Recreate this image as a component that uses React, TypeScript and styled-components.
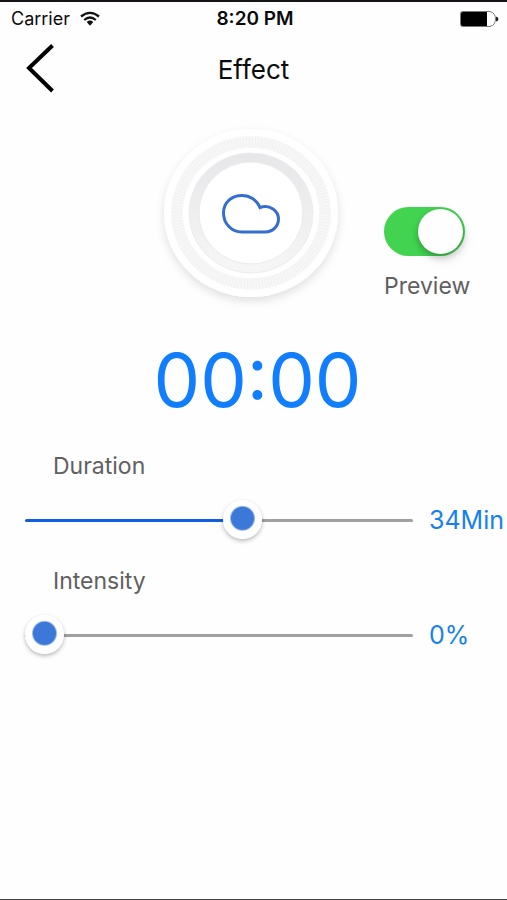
import React, { useState } from "react";
import styled, { createGlobalStyle } from "styled-components";

const GlobalStyle = createGlobalStyle`
  * { box-sizing: border-box; }
  body { margin: 0; background: #fefefe; }
`;

const Screen = styled.div`
  min-height: 100vh;
  display: flex;
  flex-direction: column;
  border-top: 2px solid #161416;
  border-bottom: 1px solid #444;
  background: #fefefe;
  color: #0b0b0b;
  font-family: Inter, "Liberation Sans", sans-serif;
  overflow: hidden;
`;

const StatusBar = styled.div`
  display: grid;
  grid-template-columns: 1fr auto 1fr;
  align-items: center;
  height: 33px;
  padding: 0 8px 0 11px;
  font-size: 18px;
  line-height: 24px;
`;

const Carrier = styled.div`
  display: flex;
  align-items: center;
  gap: 10px;
`;

const Clock = styled.div`
  font-size: 19px;
  font-weight: 600;
`;

const Battery = styled.svg`
  justify-self: end;
`;

const NavBar = styled.header`
  display: grid;
  grid-template-columns: 1fr auto 1fr;
  align-items: center;
  height: 66px;
  padding: 0 24px;
`;

const BackButton = styled.button`
  display: flex;
  width: 32px;
  height: 52px;
  padding: 0;
  border: 0;
  background: none;
  color: #000;
  cursor: pointer;
`;

const Title = styled.h1`
  margin: 0;
  padding-top: 4px;
  font-size: 26px;
  line-height: 32px;
  font-weight: 400;
`;

const Stage = styled.section`
  display: grid;
  grid-template-columns: 1fr auto 1fr;
  margin-top: 19px;
  padding-right: 5px;
`;

const Dial = styled.svg`
  grid-column: 2;
`;

const Preview = styled.div`
  display: flex;
  flex-direction: column;
  gap: 14px;
  padding: 87px 0 0 33px;
`;

const Switch = styled.button`
  display: flex;
  justify-content: ${(p) => (p["aria-checked"] ? "flex-end" : "flex-start")};
  width: 81px;
  height: 49px;
  padding: 2px;
  border: 0;
  border-radius: 25px;
  background: ${(p) => (p["aria-checked"] ? "#42d451" : "#ddd")};
  cursor: pointer;
`;

const Knob = styled.span`
  width: 45px;
  height: 45px;
  border-radius: 50%;
  background: #fefefe;
  box-shadow: 0 3px 7px rgba(0, 0, 0, 0.25), 3px 8px 12px rgba(0, 0, 0, 0.06);
`;

const Label = styled.label`
  color: #606060;
  font-size: 23px;
  line-height: 32px;
`;

const Timer = styled.div`
  margin-top: 25px;
  padding-left: 8px;
  color: #107eff;
  font-size: 74px;
  line-height: 90px;
  text-align: center;
`;

const Controls = styled.main`
  display: flex;
  flex-direction: column;
  gap: 22px;
  margin-top: 25px;
  padding-left: 25px;
`;

const Field = styled.div`
  display: flex;
  flex-direction: column;
  gap: 16px;

  ${Label} { padding-left: 28px; }
`;

const SliderRow = styled.div`
  display: grid;
  grid-template-columns: 1fr 78px;
  align-items: center;
  gap: 16px;
  height: 45px;
`;

const Slider = styled.input`
  appearance: none;
  width: 100%;
  height: 45px;
  margin: 0;
  background: none;
  cursor: pointer;

  &::-webkit-slider-runnable-track {
    height: 3px;
    border-radius: 2px;
    background: linear-gradient(to right, #0f5fe6 var(--fill), #a0a0a0 var(--fill));
  }

  &::-webkit-slider-thumb {
    appearance: none;
    width: 39px;
    height: 39px;
    margin-top: -19px;
    border-radius: 50%;
    background: radial-gradient(circle at 50% 47%, #3b78d8 11px, #fff 13px);
    box-shadow: 0 2px 4px rgba(0, 0, 0, 0.28);
  }
`;

const Value = styled.output`
  padding-bottom: 2px;
  color: #1681ee;
  font-size: 25px;
  line-height: 32px;
  white-space: nowrap;
`;

function SliderField({ id, label, max, initial, unit }: { id: string; label: string; max: number; initial: number; unit: string }) {
  const [value, setValue] = useState(initial);
  const fill = { "--fill": `max(3px, ${(value / max) * 100}%)` } as React.CSSProperties;
  return (
    <Field>
      <Label htmlFor={id}>{label}</Label>
      <SliderRow>
        <Slider
          id={id}
          type="range"
          min={0}
          max={max}
          value={value}
          style={fill}
          onChange={(e) => setValue(Number(e.target.value))}
        />
        <Value htmlFor={id}>{value}{unit}</Value>
      </SliderRow>
    </Field>
  );
}

function CloudDial() {
  return (
    <Dial width="200" height="190" viewBox="0 0 200 190" aria-hidden="true">
      <defs>
        <filter id="dialShadow" x="-20%" y="-20%" width="140%" height="140%">
          <feDropShadow dx="0" dy="4" stdDeviation="5" floodColor="#000" floodOpacity="0.12" />
        </filter>
        <linearGradient id="groove" x1="0" y1="0" x2="0" y2="1">
          <stop offset="0" stopColor="#e7e7e9" />
          <stop offset="1" stopColor="#f6f6f7" />
        </linearGradient>
      </defs>
      <ellipse cx="100" cy="93" rx="87" ry="84" fill="#fff" filter="url(#dialShadow)" />
      <ellipse cx="100" cy="93" rx="74" ry="71" fill="none" stroke="#f7f7f7" strokeWidth="12" />
      <ellipse cx="100" cy="93" rx="74" ry="71" fill="none" stroke="#f1f1f1" strokeWidth="10" strokeDasharray="1 2" />
      <ellipse cx="100" cy="93" rx="62" ry="60" fill="url(#groove)" stroke="#ececec" />
      <ellipse cx="100" cy="93" rx="52" ry="51" fill="#fff" stroke="#ebebeb" />
      <path
        d="M91 112C80 112 72.500 103 72.500 93C72.500 82 81 75.500 91 75.500C99 75.500 106 80 109 87.500C119 84 127.500 91 127.500 99C127.500 106 122 112 114 112Z"
        fill="none"
        stroke="#346fd0"
        strokeWidth="3"
        strokeLinejoin="miter"
      />
    </Dial>
  );
}

export default function App() {
  const [preview, setPreview] = useState(true);
  return (
    <Screen>
      <GlobalStyle />
      <StatusBar>
        <Carrier>
          Carrier
          <svg width="20" height="16" viewBox="0 0 20 16" aria-label="Wi-Fi">
            <g fill="none" stroke="#111" strokeWidth="2.300">
              <path d="M1 5.500Q10-1.800 19 5.500" />
              <path d="M4.200 9Q10 4 15.800 9" />
            </g>
            <path d="M6.700 11Q10 8.200 13.300 11L10 14.800Z" fill="#111" />
          </svg>
        </Carrier>
        <Clock>8:20 PM</Clock>
        <Battery width="40" height="18" viewBox="0 0 40 18" aria-label="Battery">
          <path d="M3.500 1.500H31Q36.500 3 36.500 9T31 16.500H3.500Q1.500 16.500 1.500 14.500V3.500Q1.500 1.500 3.500 1.500Z" fill="#fff" stroke="#777" />
          <path d="M2 3.500Q2 2 3.500 2H28V16H3.500Q2 16 2 14.500Z" fill="#000" />
          <path d="M37 6.500Q39.500 7 39.500 9T37 11.500Z" fill="#222" />
        </Battery>
      </StatusBar>
      <NavBar>
        <BackButton type="button" aria-label="Back">
          <svg width="32" height="52" viewBox="0 0 32 52">
            <path d="M28.500 3.500L5 26L28.500 49" fill="none" stroke="currentColor" strokeWidth="4" />
          </svg>
        </BackButton>
        <Title>Effect</Title>
      </NavBar>
      <Stage>
        <CloudDial />
        <Preview>
          <Switch
            id="preview"
            type="button"
            role="switch"
            aria-checked={preview}
            onClick={() => setPreview(!preview)}
          >
            <Knob />
          </Switch>
          <Label htmlFor="preview">Preview</Label>
        </Preview>
      </Stage>
      <Timer role="timer">00:00</Timer>
      <Controls>
        <SliderField id="duration" label="Duration" max={60} initial={34} unit="Min" />
        <SliderField id="intensity" label="Intensity" max={100} initial={0} unit="%" />
      </Controls>
    </Screen>
  );
}
